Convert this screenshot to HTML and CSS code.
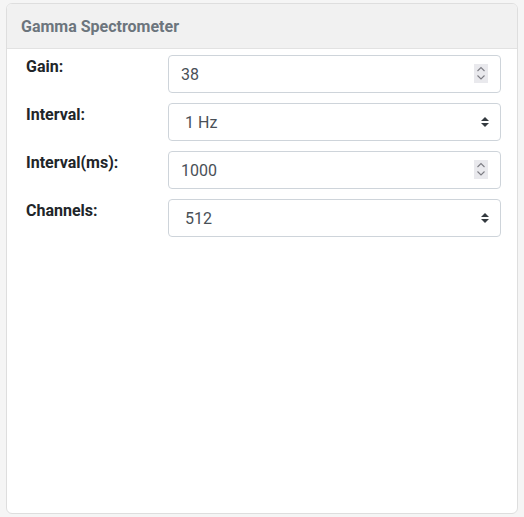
FILE: index.html
```html
<!DOCTYPE html>
<html>
<head>
<meta charset="utf-8">
<link rel="stylesheet" href="styles.css">
</head>
<body>
<div class="card">
  <div class="card-header">Gamma Spectrometer</div>
  <div class="card-body">
    <label class="lbl">Gain:</label>
    <div class="field">
      <input class="ctl" type="number" value="38">
      <svg class="spin" width="14" height="19" viewBox="0 0 14 19"><rect width="14" height="19" fill="#e9e9ed"/><path d="M3.5 7L7 3.5L10.5 7M3.5 11.5L7 15L10.5 11.5" fill="none" stroke="#7d7d84" stroke-width="1.1"/></svg>
    </div>
    <label class="lbl">Interval:</label>
    <div class="field">
      <select class="ctl sel"><option>1 Hz</option></select>
      <svg class="arrows" width="8" height="10" viewBox="0 0 4 5"><path fill="#343a40" d="M2 0L0 2h4zm0 5L0 3h4z"/></svg>
    </div>
    <label class="lbl">Interval(ms):</label>
    <div class="field">
      <input class="ctl" type="number" value="1000">
      <svg class="spin" width="14" height="19" viewBox="0 0 14 19"><rect width="14" height="19" fill="#e9e9ed"/><path d="M3.5 7L7 3.5L10.5 7M3.5 11.5L7 15L10.5 11.5" fill="none" stroke="#7d7d84" stroke-width="1.1"/></svg>
    </div>
    <label class="lbl">Channels:</label>
    <div class="field">
      <select class="ctl sel"><option>512</option></select>
      <svg class="arrows" width="8" height="10" viewBox="0 0 4 5"><path fill="#343a40" d="M2 0L0 2h4zm0 5L0 3h4z"/></svg>
    </div>
  </div>
</div>
</body>
</html>
```
FILE: styles.css
```css
html, body { margin: 0; padding: 0; }
body {
  background: #f5f5f5;
  padding: 3px 6px 3px 6px;
  height: 517px;
  box-sizing: border-box;
  font-family: Roboto, "Liberation Sans", sans-serif;
}
.card {
  height: 511px;
  box-sizing: border-box;
  background: #fff;
  border: 1px solid #dedede;
  border-radius: 6px;
  overflow: hidden;
  display: flex;
  flex-direction: column;
}
.card-header {
  height: 45px;
  box-sizing: border-box;
  background: #f1f1f1;
  border-bottom: 1px solid #e2e2e2;
  padding-left: 14px;
  display: flex;
  align-items: center;
  font-weight: 700;
  font-size: 16px;
  color: #6c757d;
}
.card-body {
  padding: 6px 16px 0 19px;
  display: grid;
  grid-template-columns: 142px 1fr;
  grid-auto-rows: 38px;
  row-gap: 10px;
}
.lbl {
  font-weight: 700;
  font-size: 16px;
  color: #212529;
  padding-top: 2px;
}
.field { position: relative; }
.ctl {
  width: 100%;
  height: 38px;
  box-sizing: border-box;
  border: 1px solid #ced4da;
  border-radius: 4px;
  background: #fff;
  font-family: Roboto, "Liberation Sans", sans-serif;
  font-size: 16px;
  color: #495057;
  padding: 6px 12px;
  margin: 0;
  outline: none;
}
.ctl::-webkit-inner-spin-button,
.ctl::-webkit-outer-spin-button {
  -webkit-appearance: none;
  margin: 0;
}
.sel {
  -webkit-appearance: none;
  appearance: none;
  padding-left: 16px;
}
.arrows {
  position: absolute;
  right: 12px;
  top: 14px;
  pointer-events: none;
}
.spin {
  position: absolute;
  right: 13px;
  top: 9px;
  pointer-events: none;
}
```
